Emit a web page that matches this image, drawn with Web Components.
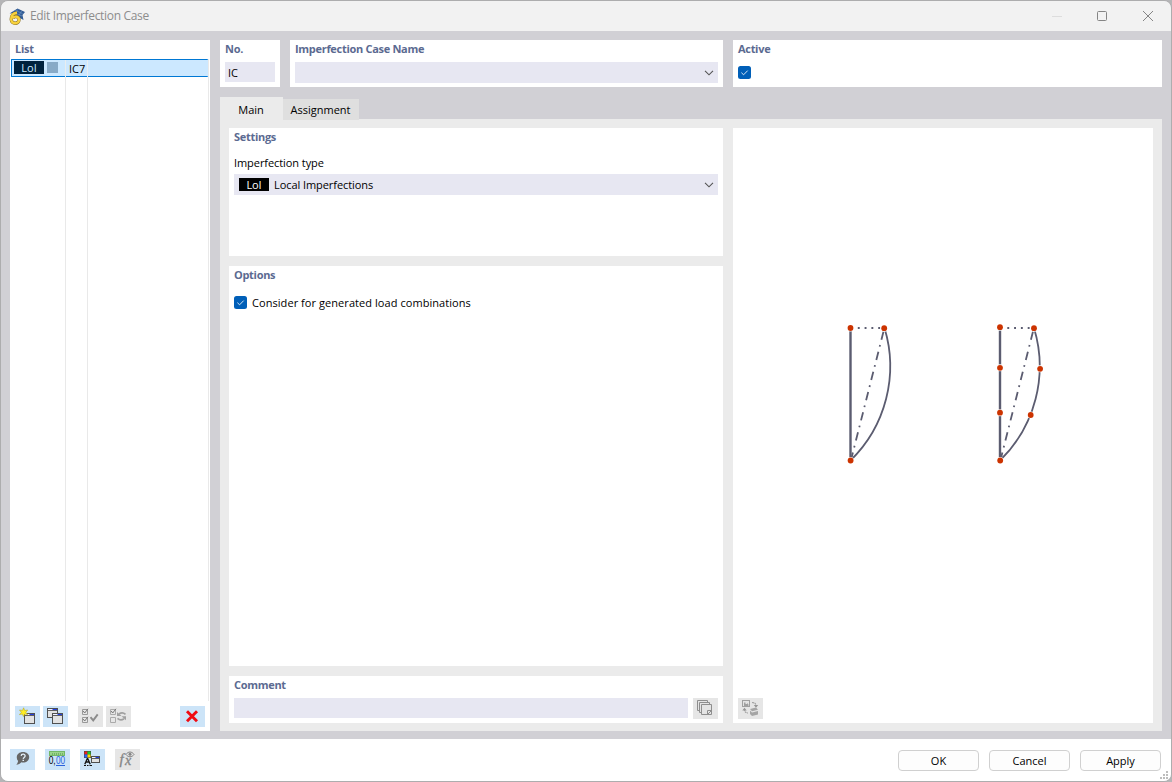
<!DOCTYPE html>
<html lang="en">
<head>
<meta charset="utf-8">
<title>Edit Imperfection Case</title>
<style>
  html, body { height: 100%; }
  body { margin: 0; background: #b5b5b7; overflow: hidden; }
</style>
</head>
<body>
<imperfection-dialog></imperfection-dialog>

<script>
const define = (name, html) => customElements.define(name, class extends HTMLElement {
  constructor() {
    super()
    const template = document.createElement('template')
    template.innerHTML = typeof html === 'function' ? html(this) : html
    this.attachShadow({ mode: 'open' }).appendChild(template.content.cloneNode(true))
  }
})

const miniWindow = (x, y, w = 11, h = 10) => `
  <rect x="${x + .5}" y="${y + .5}" width="${w - 1}" height="${h - 1}" fill="#e2e2e2" stroke="#505050"/>
  <path d="M${x + 1} ${y + 1.5}h${w - 2}" stroke="#f4f6ff"/>
  <path d="M${x + w / 2} ${y + 1.5}h${w / 2 - 1}" stroke="#2340e0"/>
  <path d="M${x + 1} ${y + 2.5}h${w - 2}" stroke="#606060"/>`

const icons = {
  create: `${miniWindow(9, 7, 11, 11)}
    <path d="M8.6 1.8l1.1 2.7 3-.5-1.9 2.3 1.8 2.3-2.9-.5-1.2 2.4-1.1-2.4-3 .5 2-2.3-1.9-2.3 3 .4z" fill="#ffee22" stroke="#b7a72a" stroke-width=".6"/>`,
  copy: `${miniWindow(4, 2, 11, 10)}${miniWindow(9, 7, 11, 11)}`,
  checkAll: `<g fill="none" stroke="#777">
    <path d="M4.5 3.5h5v5h-5zM4.5 11.5h5v5h-5z" stroke="#999"/>
    <path d="M5.2 5l1.5 2L10 2.8M5.2 13l1.5 2L10 10.8"/></g>
    <path d="M12.500 11.200l2.700 3.200 4.500-6" fill="none" stroke="#8b8b8b" stroke-width="1.900"/>`,
  toggle: `<g fill="none" stroke="#777">
    <path d="M4.5 3.5h5v5h-5zM4.5 11.5h5v5h-5z" stroke="#aaa"/>
    <path d="M5.200 5l1.500 2L10 2.800"/></g>
    <g fill="none" stroke="#a0a0a0" stroke-width="1.700"><path d="M19.500 8.300c-2-1.800-4.500-1.800-6.500-.3M11.500 12.300c2 1.800 4.500 1.800 6.500.4"/></g>
    <path d="M11 6v4h4.500zM20 14.200v-4h-4.500z" fill="#a0a0a0"/>`,
  remove: `<path d="M7 5.200l10 10M17 5.200l-10 10" stroke="#f00b12" stroke-width="2.900"/>`,
  help: `<path d="M13 3c3.500 0 6.200 2.200 6.200 5.200s-2.700 5.300-6.200 5.300c-.6 0-1.200 0-1.700-.2-1.200 1.500-2.900 2.300-5 2.400 1-1 1.600-2.300 1.800-3.700A5.100 5.100 0 0 1 6.800 8.200C6.800 5.200 9.500 3 13 3z" fill="#666"/>
    <path d="M11.200 6.900c.1-2.500 4-2.300 3.900.1 0 1.400-1.800 1.500-1.900 2.900" fill="none" stroke="#e5f1fa" stroke-width="1.300"/>
    <path d="M12.500 10.700H14V12h-1.500z" fill="#e5f1fa"/>`,
  decimals: `<rect x="4.500" y="2.500" width="15" height="4" fill="#9bd48b" stroke="#72b866"/>
    <path d="M7.500 4v2M9.500 4v2M11.500 4v2M13.500 4v2M15.500 4v2M17.500 4v2" stroke="#62a657" stroke-width=".7"/>
    <text x="3.700" y="15.400" font-size="10.500" textLength="7" lengthAdjust="spacingAndGlyphs" fill="#000">0,</text>
    <text x="11" y="15.400" font-size="10.500" textLength="9.200" lengthAdjust="spacingAndGlyphs" fill="#2b62dc">00</text>
    <path d="M11 16.500h9" stroke="#2b62dc"/>`,
  view: `<path d="M4 2h7v7H4z" fill="#444"/>
    <path d="M4.500 2.500h3v3h-3z" fill="#ef2020"/><path d="M7.500 2.500h3v3h-3z" fill="#18cb2c"/>
    <path d="M4.500 5.500h3v3h-3z" fill="#2863ff"/><path d="M7.500 5.500h3v3h-3z" fill="#ffd900"/>
    <path d="M7.500 9v2M7.300 9.500L4.800 15.200M7.700 9.500l2.500 5.700M5.500 13h4" fill="none" stroke="#111" stroke-width="1.300"/>
    <path d="M4 16.500h2M7 16.500h1.500M9.500 16.500H12" stroke="#111"/>${miniWindow(11, 7, 9, 7)}`,
  formula: `<text x="4.500" y="14.800" font-family="Liberation Serif, serif" font-size="15" font-style="italic" fill="#858585" stroke="#858585" stroke-width=".3">f</text>
    <text x="10" y="15.800" font-family="Liberation Serif, serif" font-size="14" font-style="italic" fill="#858585" stroke="#858585" stroke-width=".3">x</text>
    <path d="M11 5.500c2-3.300 6-3.300 8 0-2 3-6 3-8 0z" fill="none" stroke="#858585"/><circle cx="15" cy="5.300" r="1.500" fill="#858585"/>`,
  comments: `<g fill="#e4e4e4" stroke="#8e8e8e"><path d="M4.500 2.500h10v10h-10z"/><path d="M6.500 4.500h10v10h-10z"/><path d="M8.500 6.500h10v10h-10z"/></g>
    <path d="M14.500 16.500v-4h4M15 16l3-3" fill="none" stroke="#8e8e8e"/>`,
  swap: `<rect x="4.500" y="2.500" width="7" height="6" fill="#e4e4e4" stroke="#a0a0a0"/>
    <path d="M6 8V4.500h1.500V6H9v-1l1.500 1.500V8z" fill="#a0a0a0"/>
    <path d="M14 4.500c2.500 0 4 1 4 3.500M6.500 11c0 2.500 1 4 3.500 4" fill="none" stroke="#a0a0a0" stroke-width="1.200" stroke-dasharray="2 .6"/>
    <path d="M15.800 7h4.400L18 9.800zM4.300 12.500h4.400L6.500 9.800z" fill="#969696"/>
    <path d="M12 11l6-1.500 2 2.300-6 1.500zM12 12.500l2 2 6-1.500v3.500l-6 1.500-2-2z" fill="#a5a5a5"/>`
}

define('icon-button', el => `
  <style>
    :host { display: block; width: 25px; height: 21px; background: #cce4f8; }
    :host([disabled]) { background: #e6e6e6; }
    svg { display: block; font-family: "Liberation Sans", sans-serif; }
  </style>
  <svg width="25" height="21" viewBox="0 0 25 21">${icons[el.getAttribute('icon')]}</svg>`)

define('push-button', `
  <style>
    :host {
      align-items: center;
      background: #fdfdfd;
      border: 1px solid #d0d0d0;
      border-radius: 4px;
      box-sizing: border-box;
      display: flex;
      height: 21px;
      justify-content: center;
      width: 81px;
    }
  </style>
  <slot></slot>`)

define('group-box', el => `
  <style>
    :host { background: #fff; box-sizing: border-box; display: block; min-width: 0; padding: 0 5px; }
    h2 { color: #5b6a91; font-size: 11px; font-weight: 700; letter-spacing: -.3px; line-height: 18px; margin: 0; }
  </style>
  <h2>${el.getAttribute('label')}</h2>
  <slot></slot>`)

define('text-field', `
  <style>
    :host { align-items: center; background: #e7e7f2; box-sizing: border-box; display: flex; height: 20px; padding: 2px 3px 0; }
  </style>
  <slot></slot>`)

define('select-field', `
  <style>
    :host { align-items: center; background: #e7e7f2; box-sizing: border-box; display: flex; gap: 5px; height: 21px; letter-spacing: -.07px; padding: 0 4px 0 5px; }
    svg { margin-left: auto; }
  </style>
  <slot></slot>
  <svg width="10" height="6" viewBox="0 0 10 6"><path d="M1 .8l4 4 4-4" fill="none" stroke="#555" stroke-width="1.100"/></svg>`)

define('check-box', `
  <style>
    :host { align-items: center; display: flex; gap: 5px; height: 13px; letter-spacing: .06px; }
    svg { flex: none; }
  </style>
  <svg width="13" height="13" viewBox="0 0 13 13">
    <rect width="13" height="13" rx="2.500" fill="#005fb8"/>
    <path d="M3.400 6.700l2.200 2.100 4.100-4.200" fill="none" stroke="#d5e6f5"/>
  </svg>
  <slot></slot>`)

define('type-tag', `
  <style>
    :host { background: #000; color: #fff; display: block; height: 13px; line-height: 13px; text-align: center; width: 30px; }
    :host([selected]) { background: #00223d; color: #cce8ff; }
  </style>
  <slot></slot>`)

define('title-bar', `
  <style>
    :host { align-items: center; background: #f2f2f2; color: #8d8d8d; display: flex; font-size: 12px; height: 30px; letter-spacing: -.33px; padding: 0 17px 0 8px; }
    span { flex: 1; padding-left: 5px; }
    .controls { display: block; }
  </style>
  <svg width="16" height="17" viewBox="0 0 16 17">
    <path d="M.5 5.500L8.500.5 16 4l-2.500 3 1 5L10 9.500 6 5z" fill="#315b94"/>
    <path d="M4 4l9 4M6.500 2.500l7 3M9 1.500L6 5M12.500 3L10 7.500" stroke="#6992c4" stroke-width=".7"/>
    <path d="M8 4.800C4 5.200 2.200 7.800 2.200 11.300c.1 5.200 7.800 5.200 7.800.4 0-3.800-5.300-3.800-6.300-1.300" fill="none" stroke="#8b7326" stroke-width="3.300"/>
    <path d="M8 4.800C4 5.200 2.200 7.800 2.200 11.300c.1 5.200 7.800 5.200 7.800.4 0-3.800-5.300-3.800-6.300-1.300" fill="none" stroke="#f7d13c" stroke-width="2.400"/>
  </svg>
  <span><slot></slot></span>
  <svg class="controls" width="102" height="12" viewBox="0 0 102 12" fill="none" stroke="#858585">
    <path d="M0 6.500h10" stroke="#ddd"/>
    <rect x="45.500" y="1.500" width="9" height="9" rx="1"/>
    <path d="M91 1l10 10M101 1L91 11"/>
  </svg>`)

define('case-list', `
  <style>
    :host { background: #fff; display: flex; flex-direction: column; }
    h2 { color: #5b6a91; font-size: 11px; font-weight: 700; letter-spacing: -.3px; line-height: 18px; margin: 0 0 1px 5px; }
    .table {
      background: linear-gradient(#e9e9e9, #e9e9e9) 55px 0 / 1px 100% no-repeat,
        linear-gradient(#e9e9e9, #e9e9e9) 77px 0 / 1px 100% no-repeat,
        linear-gradient(#e9e9e9, #e9e9e9) 198px 0 / 1px 100% no-repeat;
      flex: 1;
      padding: 0 2px 0 1px;
    }
    .row { background: #cce8ff; border: 1px solid #0078d4; border-right: 0; border-radius: 1px; display: grid; grid-template-columns: 54px 22px 1fr; height: 16px; }
    .row > * { border-right: 1px solid #e9edf0; }
    .row > :last-child { border: 0; }
    .type { align-items: flex-start; display: flex; gap: 3px; padding: 1px 0 0 2px; }
    .swatch { background: #88aac7; height: 11px; margin-top: 1px; width: 11px; }
    .no { line-height: 18px; padding-left: 3px; white-space: nowrap; }
    .tools { display: flex; gap: 3px; padding: 5px 5px 4px; }
    .gap { margin-left: 7px; }
    .end { margin-left: auto; }
  </style>
  <h2>List</h2>
  <div class="table">
    <div class="row">
      <div class="type"><type-tag selected>LoI</type-tag><div class="swatch"></div></div>
      <div class="no">IC7</div>
      <div></div>
    </div>
  </div>
  <div class="tools">
    <icon-button icon="create"></icon-button>
    <icon-button icon="copy"></icon-button>
    <icon-button class="gap" icon="checkAll" disabled></icon-button>
    <icon-button icon="toggle" disabled></icon-button>
    <icon-button class="end" icon="remove"></icon-button>
  </div>`)

define('tab-strip', `
  <style>
    :host { display: flex; height: 22px; }
    div { box-sizing: border-box; padding-right: 1px; text-align: center; }
    .main { background: #ebebeb; line-height: 26px; width: 63px; }
    .other { background: #dfdfdf; height: 21px; line-height: 22px; margin-top: 2px; position: relative; width: 76px; }
  </style>
  <div class="main">Main</div>
  <div class="other">Assignment</div>`)

const node = ([x, y]) => `<circle cx="${x}" cy="${y}" r="3.500" fill="#fff"/><circle cx="${x}" cy="${y}" r="2.900" fill="#cc3300"/>`

const member = (x, nodes) => `
  <g fill="none" stroke="#5b5c70">
    <path d="M${x} 200v132.500" stroke-width="2.400"/>
    <path d="M${x + 7.300} 200h24" stroke-width="1.800" stroke-dasharray="1.900 4.900"/>
    <path d="M${x + 33} 203.500L${x + .5} 332" stroke-width="1.800" stroke-dasharray="8.500 5.400 1.700 5.200"/>
    <path d="M${x + 34} 200A131.600 131.600 0 0 1 ${x} 332.500" stroke-width="1.800"/>
  </g>
  ${nodes.map(node).join('')}`

define('imperfection-preview', `
  <style>
    :host { background: #fff; display: flex; flex-direction: column; justify-content: space-between; }
    svg { display: block; }
    icon-button { margin: 0 0 4px 5px; }
  </style>
  <svg width="420" height="420" viewBox="0 0 420 420">
    ${member(117.5, [[117.5, 200], [151.2, 200.2], [117.6, 332.5]])}
    ${member(267, [[267, 199.2], [267, 239.8], [267, 284.700], [267.200, 332.500], [301, 200.200], [307.100, 240.800], [297.700, 287]])}
  </svg>
  <icon-button icon="swap" disabled></icon-button>`)

define('dialog-footer', `
  <style>
    :host { background: #fff; box-sizing: border-box; display: flex; gap: 10px; height: 42px; padding: 10px 10px 0 9px; position: relative; }
    push-button:first-of-type { margin-left: auto; }
    icon-button, push-button { flex: none; }
    push-button { margin-top: 1px; }
    .grip { bottom: 1px; position: absolute; right: 2px; }
  </style>
  <icon-button icon="help"></icon-button>
  <icon-button icon="decimals"></icon-button>
  <icon-button icon="view"></icon-button>
  <icon-button icon="formula" disabled></icon-button>
  <push-button>OK</push-button>
  <push-button>Cancel</push-button>
  <push-button>Apply</push-button>
  <svg class="grip" width="9" height="9" viewBox="0 0 9 9" fill="#bdbdbd">
    <path d="M6 0h2v2H6zM3 3h2v2H3zM6 3h2v2H6zM0 6h2v2H0zM3 6h2v2H3zM6 6h2v2H6z"/>
  </svg>`)

define('imperfection-dialog', `
  <style>
    :host {
      background: #d1d0d5;
      border: 1px solid #adadae;
      border-radius: 8px;
      box-sizing: border-box;
      color: #000;
      display: flex;
      flex-direction: column;
      font: 11px/14px "Open Sans", "Noto Sans", sans-serif;
      height: 782px;
      overflow: hidden;
      width: 1172px;
    }
    .body { display: grid; flex: 1; gap: 10px; grid-template-columns: 200px 1fr; min-height: 0; padding: 9px 9px 8px; }
    .content { display: flex; flex-direction: column; min-width: 0; }
    .header { display: grid; gap: 10px; grid-template-columns: 60px 433px 1fr; height: 47px; margin-bottom: 10px; }
    .header text-field, .header select-field { margin-top: 4px; }
    .header check-box { margin-top: 8px; }
    .panel { background: #ebebeb; display: grid; flex: 1; gap: 10px; grid-template-columns: 494px 1fr; padding: 9px 9px 8px; }
    .groups { display: grid; gap: 10px; grid-template-rows: 128px 400px 1fr; }
    .label { letter-spacing: -.07px; margin: 10px 0 4px; }
    .options { margin-top: 12px; }
    .comment { display: flex; gap: 5px; margin-top: 4px; }
    .comment text-field { flex: 1; }
  </style>
  <title-bar>Edit Imperfection Case</title-bar>
  <div class="body">
    <case-list></case-list>
    <div class="content">
      <div class="header">
        <group-box label="No."><text-field>IC</text-field></group-box>
        <group-box label="Imperfection Case Name"><select-field></select-field></group-box>
        <group-box label="Active"><check-box></check-box></group-box>
      </div>
      <tab-strip></tab-strip>
      <div class="panel">
        <div class="groups">
          <group-box label="Settings">
            <div class="label">Imperfection type</div>
            <select-field><type-tag>LoI</type-tag><span>Local Imperfections</span></select-field>
          </group-box>
          <group-box label="Options">
            <check-box class="options">Consider for generated load combinations</check-box>
          </group-box>
          <group-box label="Comment">
            <div class="comment"><text-field></text-field><icon-button icon="comments" disabled></icon-button></div>
          </group-box>
        </div>
        <imperfection-preview></imperfection-preview>
      </div>
    </div>
  </div>
  <dialog-footer></dialog-footer>`)
</script>
</body>
</html>
